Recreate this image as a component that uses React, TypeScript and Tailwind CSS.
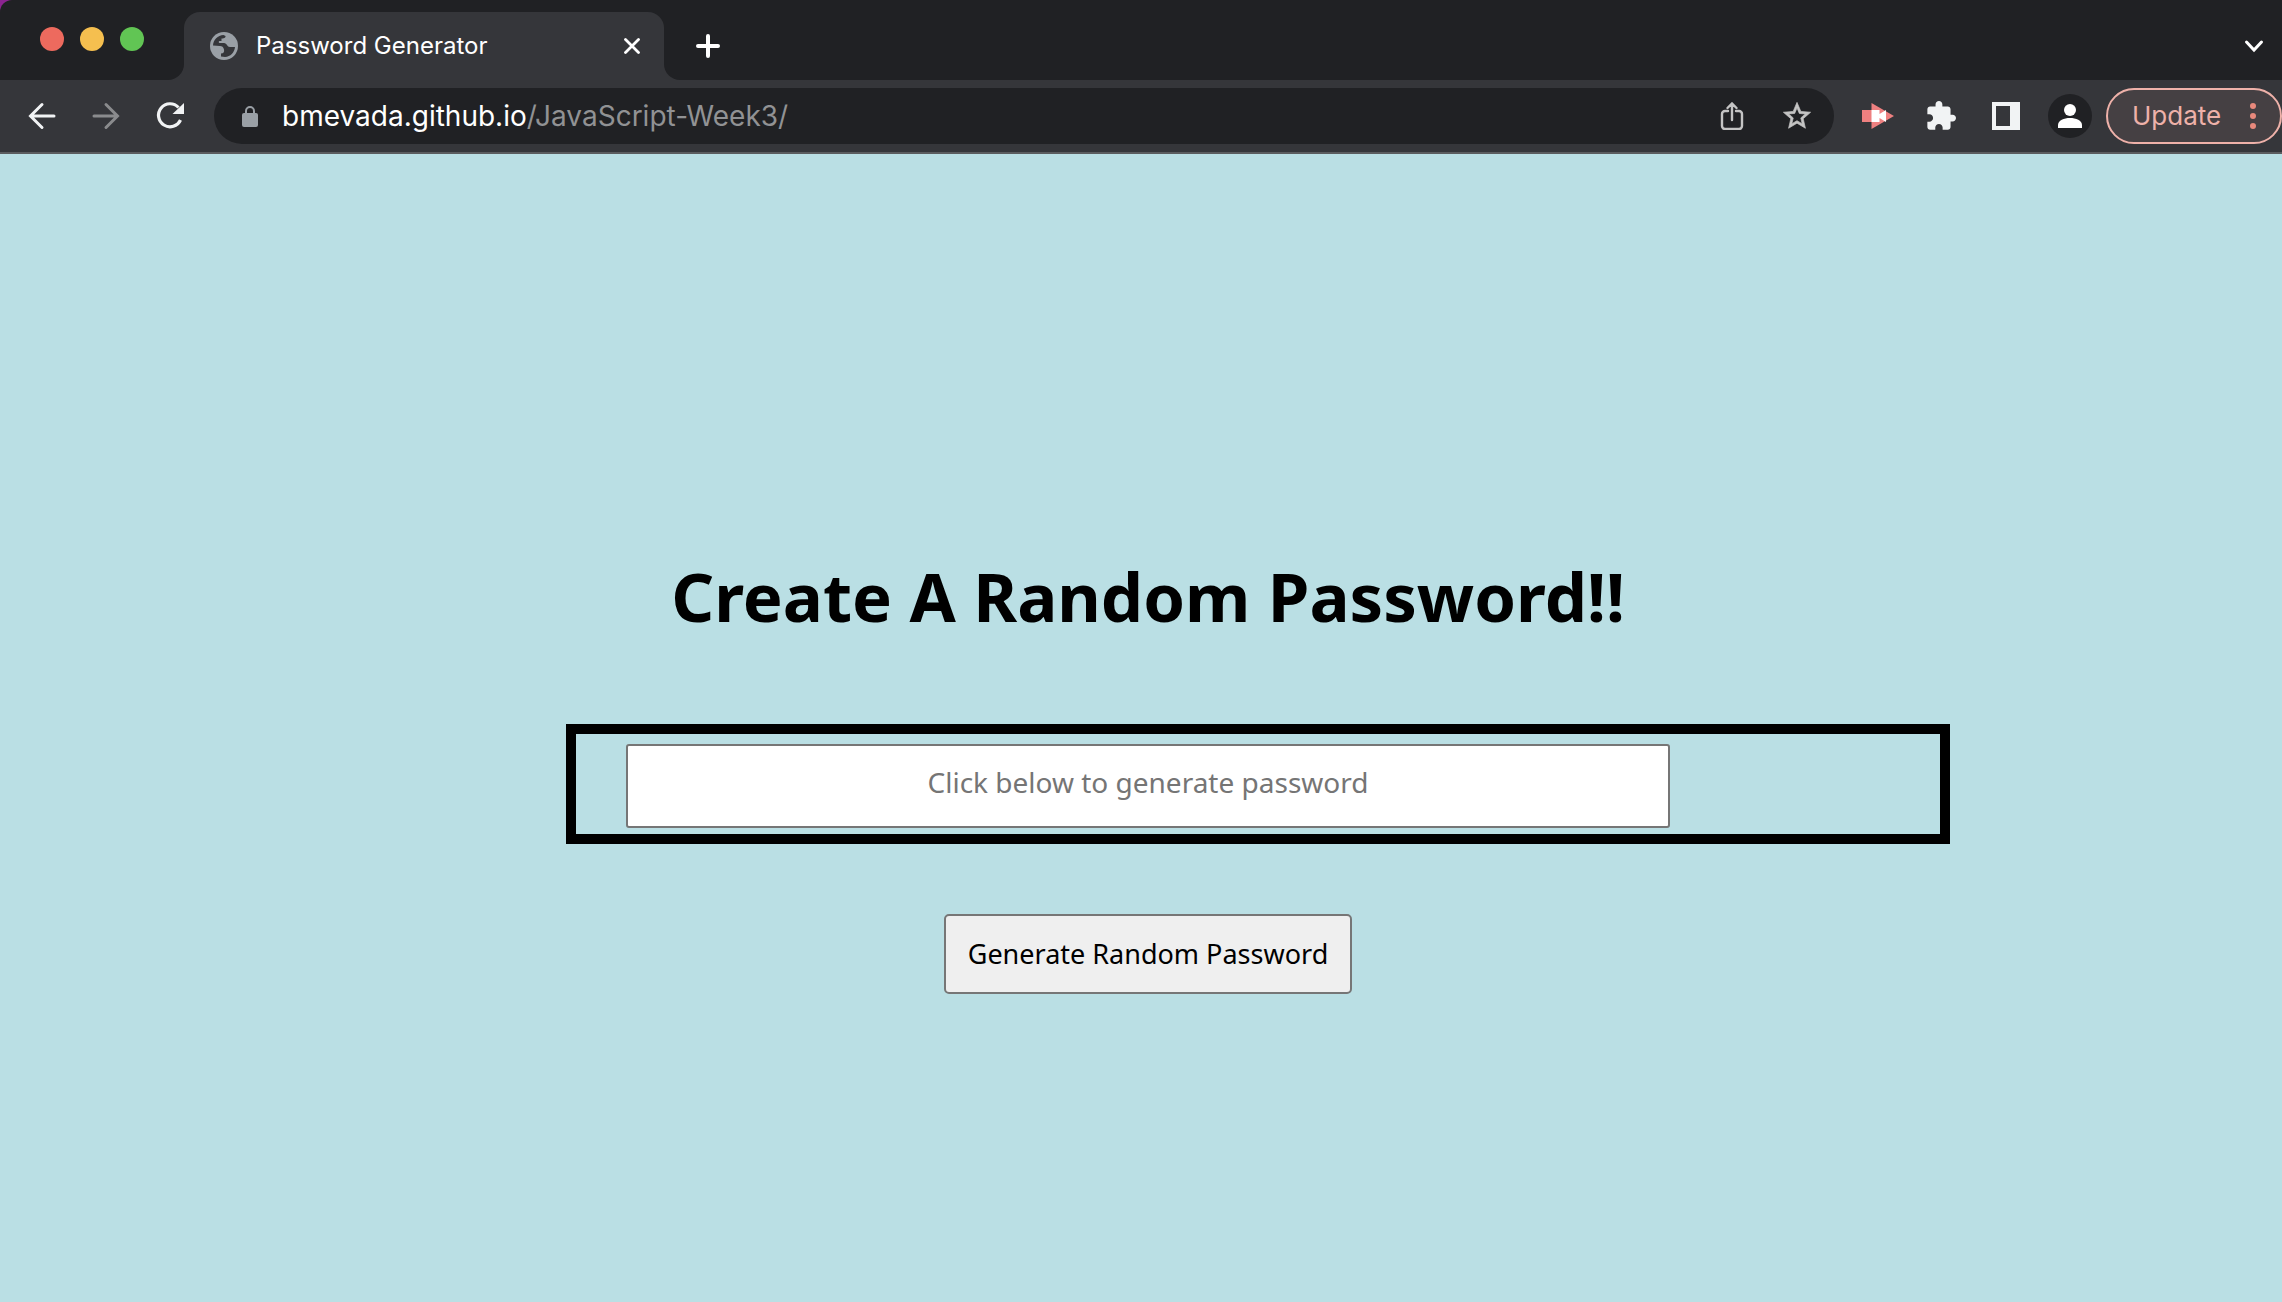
import React from "react";

const dots = ["bg-[#ed6a5e]", "bg-[#f5bf4f]", "bg-[#61c554]"];

function Icon({ size, box, className = "", children }: { size: number; box?: string; className?: string; children: React.ReactNode }) {
  return (
    <svg width={size} height={size} viewBox={box ?? `0 0 ${size} ${size}`} className={`block shrink-0 ${className}`} fill="none" aria-hidden="true">
      {children}
    </svg>
  );
}

function TabStrip() {
  return (
    <div className="flex h-20 bg-[#35363a]">
      <div className="w-[184px] shrink-0 bg-linear-to-b from-[#8b2490] from-50% to-[#35363a] to-50%">
        <div className="flex h-full gap-4 rounded-tl-xl rounded-br-2xl bg-[#202124] pt-[27px] pl-10">
          {dots.map((c) => (
            <span key={c} className={`size-6 rounded-full ${c}`} />
          ))}
        </div>
      </div>
      <div className="w-[480px] shrink-0 bg-[#202124] pt-3">
        <div className="flex h-full items-center rounded-t-2xl bg-[#35363a] pr-6 pl-[26px]">
          <Icon size={28}>
            <circle cx="14" cy="14" r="14" fill="#9aa0a6" />
            <path d="M3 13.5C3.2 8 7.800 3.200 13.500 3L15.500 4C16 6 13 6.500 11.500 6.500V9H9.500C8.500 9 8.500 11 9.500 11H14C17 11 17 15 20 15H25C24.500 20.500 20.500 24.700 15 25L11 24.500V21.500C13.500 21.500 14.500 20 14 17.500C13.500 15 12 14 10 14Z" fill="#35363a" />
          </Icon>
          <span className="ml-[18px] flex-1 text-2xl text-white">Password Generator</span>
          <button aria-label="Close tab">
            <Icon size={16}><path d="M1.500 1.500 14.500 14.500M14.500 1.500 1.500 14.500" stroke="#fff" strokeWidth="2.800" strokeLinecap="round" /></Icon>
          </button>
        </div>
      </div>
      <div className="flex flex-1 items-center justify-between rounded-bl-2xl bg-[#202124] pt-3 pr-[18px] pl-8">
        <button aria-label="New tab">
          <Icon size={24}><path d="M12 2V22M2 12H22" stroke="#fff" strokeWidth="4" strokeLinecap="round" /></Icon>
        </button>
        <button aria-label="Search tabs">
          <Icon size={20}><path d="M2.500 6 10 14 17.500 6" stroke="#fff" strokeWidth="3" strokeLinecap="round" /></Icon>
        </button>
      </div>
    </div>
  );
}

function Toolbar() {
  return (
    <div className="flex h-[74px] items-center border-b-2 border-[#5b5c5f] bg-[#35363a]">
      <div className="flex w-[214px] shrink-0 items-center gap-9 pl-7">
        <button aria-label="Back">
          <Icon size={28}><path d="M26 14H3M14 2.500 2.500 14 14 25.500" stroke="#f1f3f4" strokeWidth="3" strokeLinecap="round" /></Icon>
        </button>
        <button aria-label="Forward">
          <Icon size={28}><path d="M2 14H25M14 2.500 25.500 14 14 25.500" stroke="#8a8b8d" strokeWidth="3" strokeLinecap="round" /></Icon>
        </button>
        <button aria-label="Reload">
          <Icon size={28}>
            <path d="M22.500 5.500A11.500 11.500 0 1 0 24.500 18" stroke="#f1f3f4" strokeWidth="3.200" />
            <path d="M28 1V12H16.500Z" fill="#f1f3f4" />
          </Icon>
        </button>
      </div>
      <div className="flex h-14 min-w-0 flex-1 items-center rounded-full bg-[#202124] pr-[22px] pl-7">
        <Icon size={22}>
          <rect x="0" y="8" width="16" height="14" rx="2" fill="#9aa0a6" />
          <path d="M4 9V6A4 4 0 0 1 12 6V9" stroke="#9aa0a6" strokeWidth="2" />
        </Icon>
        <div className="ml-[18px] flex-1 text-[28px] leading-9 text-white">
          bmevada.github.io<span className="text-[#919294]">/JavaScript-Week3/</span>
        </div>
        <div className="flex items-center gap-9">
          <button aria-label="Share">
            <Icon size={28}>
              <path d="M10 9H7A3 3 0 0 0 4 12V24A3 3 0 0 0 7 27H21A3 3 0 0 0 24 24V12A3 3 0 0 0 21 9H18M14 18V2M9.500 6 14 1.500 18.500 6" stroke="#c4c4c4" strokeWidth="2.400" strokeLinecap="round" />
            </Icon>
          </button>
          <button aria-label="Bookmark">
            <Icon size={30} box="1 1 22 22">
              <path fill="#c4c4c4" stroke="#c4c4c4" strokeWidth="0.500" d="M22 9.240l-7.190-.620L12 2 9.190 8.630 2 9.240l5.460 4.730L5.820 21 12 17.270 18.180 21l-1.630-7.030L22 9.240zM12 15.400l-3.760 2.270 1-4.280-3.320-2.880 4.380-.380L12 6.100l1.710 4.040 4.380.380-3.320 2.880 1 4.280L12 15.400z" />
            </Icon>
          </button>
        </div>
      </div>
      <div className="flex shrink-0 items-center pl-7">
        <button aria-label="Screen recorder">
          <Icon size={32} box="0 -2 32 32">
            <path d="M0 8H9.500V1L32 14 9.500 27V20H0Z" fill="#ee8080" />
            <path d="M9.500 8H17.500V12L24 8V20L17.500 16V20H9.500Z" fill="#fff" />
          </Icon>
        </button>
        <button aria-label="Extensions" className="ml-8">
          <Icon size={30} box="1 1 22 22">
            <path fill="#f1f3f4" d="M20.500 11H19V7c0-1.100-.900-2-2-2h-4V3.500C13 2.120 11.880 1 10.500 1S8 2.120 8 3.500V5H4c-1.100 0-1.990.900-1.990 2v3.800H3.500c1.490 0 2.700 1.210 2.700 2.700s-1.210 2.700-2.700 2.700H2V20c0 1.100.900 2 2 2h3.800v-1.500c0-1.490 1.210-2.700 2.700-2.700 1.490 0 2.700 1.210 2.700 2.700V22H17c1.100 0 2-.900 2-2v-4h1.500c1.380 0 2.500-1.120 2.500-2.500S21.880 11 20.500 11z" />
          </Icon>
        </button>
        <button aria-label="Side panel" className="ml-9">
          <Icon size={28}><path fillRule="evenodd" d="M0 0H28V28H0ZM4 4V24H18V4Z" fill="#f1f3f4" /></Icon>
        </button>
        <button aria-label="Profile" className="ml-7 flex size-11 items-center justify-center rounded-full bg-[#202124]">
          <Icon size={24}>
            <circle cx="12" cy="6" r="6" fill="#fff" />
            <path d="M0 24V21C0 11.500 24 11.500 24 21V24Z" fill="#fff" />
          </Icon>
        </button>
        <button className="ml-3.5 flex h-14 w-44 items-center justify-between rounded-full border-2 border-[#eeb1a9] bg-[#454043] pr-6 pl-6 text-[26px] leading-9 text-[#eeb1a9]">
          Update
          <span className="flex flex-col gap-1">
            {[0, 1, 2].map((i) => (
              <span key={i} className="size-1.5 rounded-full bg-[#e8897c]" />
            ))}
          </span>
        </button>
      </div>
    </div>
  );
}

export default function App() {
  return (
    <div className="flex min-h-screen flex-col bg-[#badfe4] font-['Inter',sans-serif]">
      <header>
        <TabStrip />
        <Toolbar />
      </header>
      <main className="flex flex-1 justify-center pt-[394px] pl-[234px] font-['Noto_Sans',sans-serif] text-black">
        <div className="w-full max-w-[1384px]">
          <h1 className="pr-[280px] pl-[60px] text-center text-[67px] leading-[96px] font-bold whitespace-nowrap">Create A Random Password!!</h1>
          <div className="mt-20 border-[10px] border-black pt-2.5 pr-[270px] pb-1.5 pl-[50px]">
            <input
              type="text"
              aria-label="Generated password"
              placeholder="Click below to generate password"
              className="block h-[84px] w-full rounded-[3px] border-2 border-[#767676] bg-white pb-2 text-center text-[28px] placeholder:text-[#757575]"
            />
          </div>
          <div className="mt-[70px] flex justify-center pr-[280px] pl-[60px]">
            <button className="h-20 w-[408px] rounded-[5px] border-2 border-[#767676] bg-[#efefef] text-[27px] whitespace-nowrap">Generate Random Password</button>
          </div>
        </div>
      </main>
    </div>
  );
}
